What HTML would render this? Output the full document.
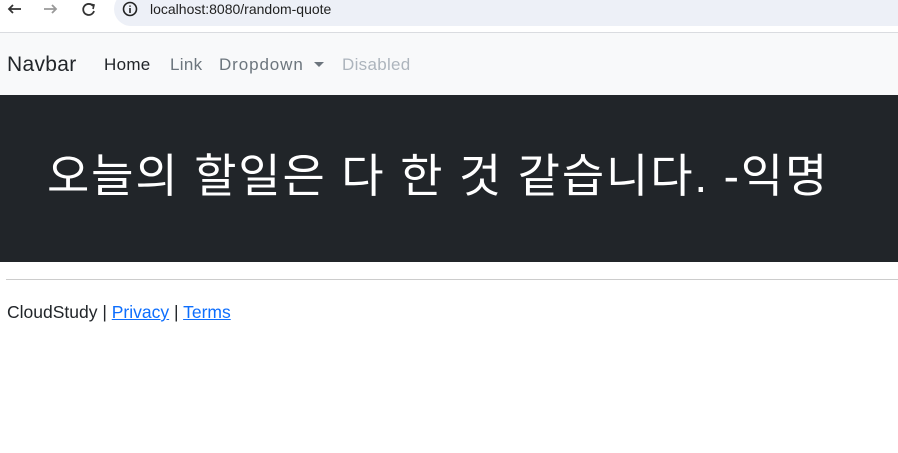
<!DOCTYPE html>
<html><head><meta charset="utf-8"><style>
body{margin:0;width:898px;height:453px;background:#fff;font-family:"Liberation Sans","Noto Sans CJK KR",sans-serif;overflow:hidden;position:relative}
.bar{position:absolute;left:0;top:0;width:898px;height:32px;background:#fff;border-bottom:1px solid #dadce0}
.pill{position:absolute;left:114px;top:-8px;width:800px;height:34px;border-radius:17px;background:#edf0f7}
.url{position:absolute;left:150px;top:1px;font-size:14px;color:#1f1f1f}
.nav{position:absolute;left:0;top:33px;width:898px;height:62px;background:#f8f9fa}
.nav span{position:absolute;top:22px;font-size:17px;letter-spacing:0.3px}
.hero{position:absolute;left:0;top:95px;width:898px;height:167px;background:#212529}
.q{position:absolute;left:47px;top:45px;font-size:46px;color:#fff;white-space:nowrap;letter-spacing:1.85px}
hr{position:absolute;left:6px;top:279px;width:892px;margin:0;border:0;border-top:1px solid #ccc}
.foot{position:absolute;left:7px;top:302px;font-size:17.5px;color:#212529}
.foot a{color:#0d6efd;text-decoration:underline}
</style></head><body>
<div class="bar">
<svg width="110" height="32" style="position:absolute;left:0;top:0">
<path d="M21 9 L9 9 M13 5 L9 9 L13 13" stroke="#333" stroke-width="1.8" fill="none"/>
<path d="M44 9 L56 9 M52 5 L56 9 L52 13" stroke="#999" stroke-width="1.8" fill="none"/>
<path d="M93 6 A5.5 5.5 0 1 0 94 11" stroke="#333" stroke-width="1.8" fill="none"/>
<path d="M90 4 L94 5 L93 9" stroke="#333" stroke-width="1.6" fill="none"/>
</svg>
<div class="pill"></div>
<svg width="16" height="16" style="position:absolute;left:122px;top:1px"><circle cx="8" cy="8" r="6.5" stroke="#222" stroke-width="1.6" fill="none"/><path d="M8 7v5M8 4.5v1.2" stroke="#222" stroke-width="1.6"/></svg>
<div class="url">localhost:8080/random-quote</div>
</div>
<div class="nav">
<span style="left:7px;top:20px;font-size:21px;color:#212529">Navbar</span>
<span style="left:104px;color:#212529">Home</span>
<span style="left:170px;color:#6c757d">Link</span>
<span style="left:219px;color:#6c757d;letter-spacing:0.9px">Dropdown</span>
<svg width="10" height="6" style="position:absolute;left:314px;top:29px"><path d="M0 0H10L5 5Z" fill="#6c757d"/></svg>
<span style="left:342px;color:#adb5bd">Disabled</span>
</div>
<div class="hero"><div class="q">오늘의 할일은 다 한 것 같습니다. -익명</div></div>
<hr>
<div class="foot">CloudStudy | <a>Privacy</a> | <a>Terms</a></div>
</body></html>
